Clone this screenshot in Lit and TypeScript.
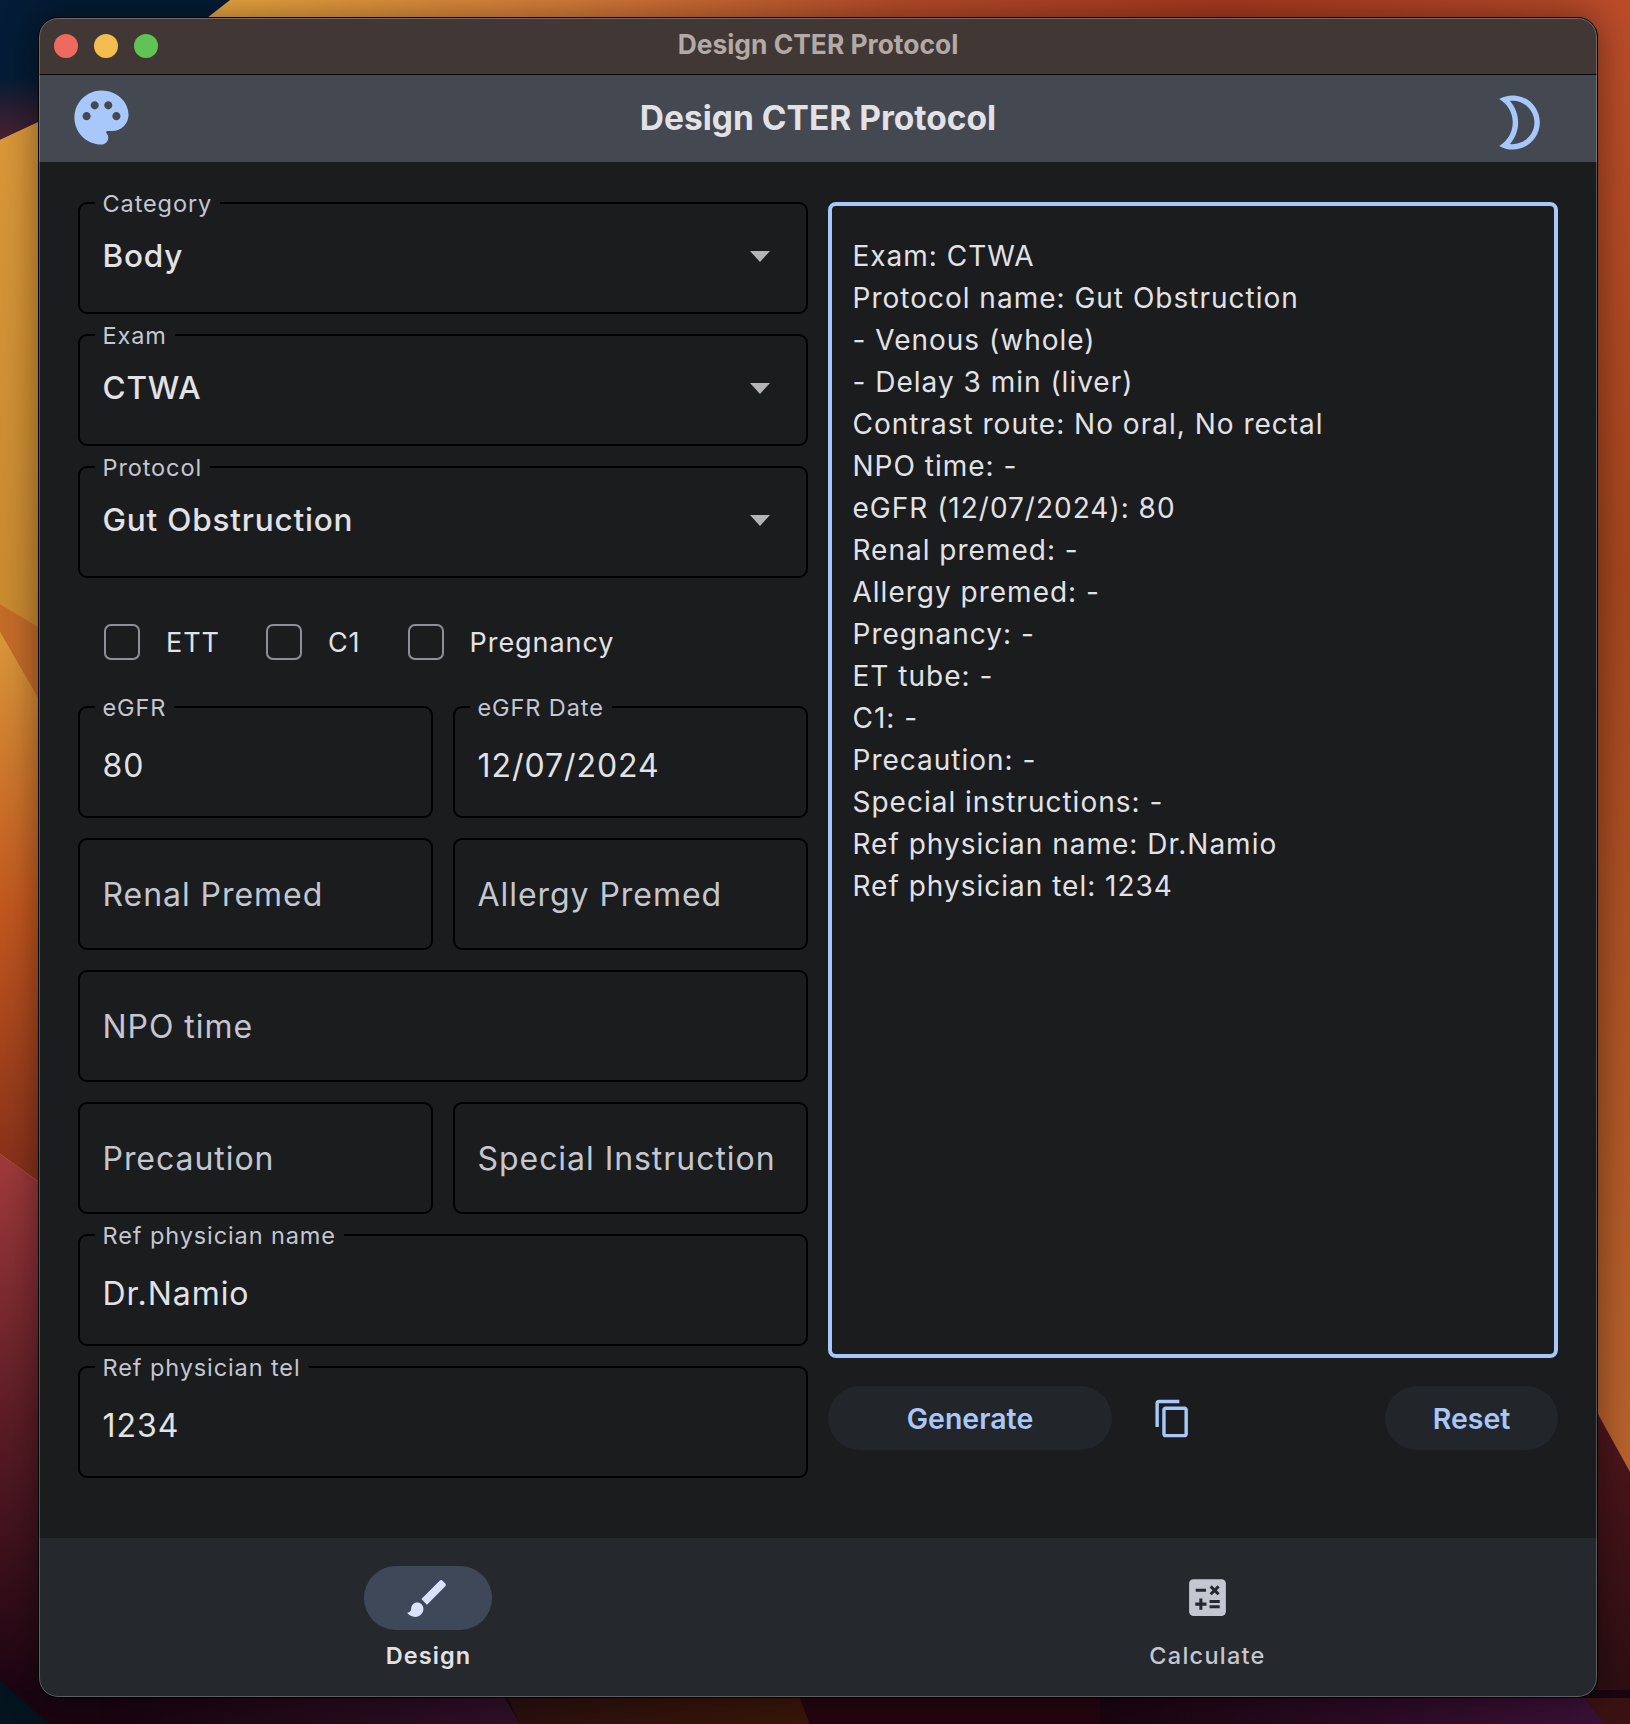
import {html, css, svg, LitElement} from 'lit';
import {customElement} from 'lit/decorators.js';

const PALETTE = 'M12 2C6.49 2 2 6.49 2 12s4.49 10 10 10c1.38 0 2.5-1.12 2.5-2.5 0-.61-.23-1.2-.64-1.67-.08-.1-.13-.21-.13-.33 0-.28.22-.5.5-.5H16c3.31 0 6-2.69 6-6 0-4.96-4.49-9-10-9zm5.5 11c-.83 0-1.5-.67-1.5-1.5s.67-1.5 1.5-1.5 1.5.67 1.5 1.5-.67 1.5-1.5 1.5zm-3-4c-.83 0-1.5-.67-1.5-1.5S13.67 6 14.5 6s1.5.67 1.5 1.5S15.33 9 14.5 9zM5 11.5c0-.83.67-1.5 1.5-1.5s1.5.67 1.5 1.5S7.33 13 6.5 13 5 12.33 5 11.5zm6-4c0 .83-.67 1.5-1.5 1.5S8 8.33 8 7.5 8.67 6 9.5 6s1.5.67 1.5 1.5z';
const MOON = 'M9.5 4c4.41 0 8 3.59 8 8s-3.59 8-8 8c-.34 0-.68-.02-1.01-.07C10.4 17.73 11.5 14.99 11.5 12s-1.1-5.73-3.01-7.93C8.82 4.02 9.16 4 9.5 4m0-2c-1.82 0-3.53.5-5 1.35 2.99 1.73 5 4.95 5 8.65s-2.01 6.92-5 8.65c1.47.85 3.18 1.35 5 1.35 5.52 0 10-4.48 10-10S15.02 2 9.5 2z';
const COPY = 'M16 1H4c-1.1 0-2 .9-2 2v14h2V3h12V1zm3 4H8c-1.1 0-2 .9-2 2v14c0 1.1.9 2 2 2h11c1.1 0 2-.9 2-2V7c0-1.1-.9-2-2-2zm0 16H8V7h11v14z';
const BRUSH = 'M7 14c-1.66 0-3 1.34-3 3 0 1.31-1.16 2-2 2 .92 1.22 2.49 2 4 2 2.21 0 4-1.79 4-4 0-1.66-1.34-3-3-3zm13.71-9.37l-1.34-1.34c-.39-.39-1.02-.39-1.41 0L9 12.25 11.75 15l8.96-8.96c.39-.39.39-1.02 0-1.41z';
const CALC = 'M19 3H5c-1.1 0-2 .9-2 2v14c0 1.1.9 2 2 2h14c1.1 0 2-.9 2-2V5c0-1.1-.9-2-2-2zm-5.97 4.06L14.09 6l1.41 1.41L16.91 6l1.06 1.06-1.41 1.41 1.41 1.41-1.06 1.06-1.41-1.4-1.41 1.41-1.06-1.06 1.41-1.41-1.41-1.42zm-6.78.66h5v1.5h-5v-1.5zM11.5 16h-2v2H8v-2H6v-1.5h2v-2h1.5v2h2V16zm6.5 1.25h-5v-1.5h5v1.5zm0-2.5h-5v-1.5h5v1.5z';

const OUTPUT = [
	'Exam: CTWA',
	'Protocol name: Gut Obstruction',
	'- Venous (whole)',
	'- Delay 3 min (liver)',
	'Contrast route: No oral, No rectal',
	'NPO time: -',
	'eGFR (12/07/2024): 80',
	'Renal premed: -',
	'Allergy premed: -',
	'Pregnancy: -',
	'ET tube: -',
	'C1: -',
	'Precaution: -',
	'Special instructions: -',
	'Ref physician name: Dr.Namio',
	'Ref physician tel: 1234',
];

const icon = (d: string, size: number, cls = '') => html`<svg class=${cls} width=${size} height=${size} viewBox="0 0 24 24" fill="currentColor"><path d=${d}></path></svg>`;

// desktop picture behind the window
const wallpaper = svg`
	<defs>
		<linearGradient id="top" x1="0" y1="0" x2="1630" y2="0" gradientUnits="userSpaceOnUse">
			<stop offset="0.14" stop-color="#eaa63f"/><stop offset="0.35" stop-color="#d97d3a"/>
			<stop offset="0.55" stop-color="#b84c2a"/><stop offset="0.75" stop-color="#a83a20"/>
			<stop offset="1" stop-color="#bb4c2a"/>
		</linearGradient>
		<linearGradient id="navy" x1="0" y1="0" x2="0" y2="140" gradientUnits="userSpaceOnUse">
			<stop offset="0.55" stop-color="#041c35"/><stop offset="1" stop-color="#4c2030"/>
		</linearGradient>
		<linearGradient id="gold" x1="0" y1="120" x2="0" y2="620" gradientUnits="userSpaceOnUse">
			<stop offset="0" stop-color="#d9983a"/><stop offset="1" stop-color="#c98a30"/>
		</linearGradient>
		<linearGradient id="fire" x1="0" y1="640" x2="0" y2="1180" gradientUnits="userSpaceOnUse">
			<stop offset="0" stop-color="#d9963a"/><stop offset="0.5" stop-color="#c2571f"/>
			<stop offset="1" stop-color="#85301a"/>
		</linearGradient>
		<linearGradient id="wine" x1="0" y1="1160" x2="0" y2="1690" gradientUnits="userSpaceOnUse">
			<stop offset="0" stop-color="#a03a3c"/><stop offset="0.5" stop-color="#5a1c25"/>
			<stop offset="1" stop-color="#1c0512"/>
		</linearGradient>
		<linearGradient id="east" x1="0" y1="0" x2="0" y2="1430" gradientUnits="userSpaceOnUse">
			<stop offset="0" stop-color="#bb4c2a"/><stop offset="0.4" stop-color="#a5461f"/>
			<stop offset="1" stop-color="#b8622c"/>
		</linearGradient>
		<linearGradient id="maroon" x1="0" y1="1420" x2="0" y2="1700" gradientUnits="userSpaceOnUse">
			<stop offset="0" stop-color="#4f161c"/><stop offset="1" stop-color="#2c0e12"/>
		</linearGradient>
		<linearGradient id="plum" x1="100" y1="0" x2="505" y2="0" gradientUnits="userSpaceOnUse">
			<stop offset="0" stop-color="#180410"/><stop offset="1" stop-color="#2f0f26"/>
		</linearGradient>
		<linearGradient id="plum2" x1="1100" y1="0" x2="1585" y2="0" gradientUnits="userSpaceOnUse">
			<stop offset="0" stop-color="#1a0510"/><stop offset="1" stop-color="#3a1035"/>
		</linearGradient>
		<linearGradient id="rust" x1="510" y1="0" x2="800" y2="0" gradientUnits="userSpaceOnUse">
			<stop offset="0" stop-color="#2a100f"/><stop offset="1" stop-color="#3a1608"/>
		</linearGradient>
	</defs>
	<rect width="1630" height="1724" fill="url(#top)"/>
	<polygon points="1000,20 1630,20 1630,1480 1000,1480" fill="url(#east)"/>
	<polygon points="0,0 230,0 207,18 60,112 0,140" fill="url(#navy)"/>
	<polygon points="0,140 60,112 60,640 0,604" fill="url(#gold)"/>
	<polygon points="0,604 60,640 60,737 0,632" fill="#c46c28"/>
	<polygon points="0,632 60,737 60,1197 0,1154" fill="url(#fire)"/>
	<polygon points="0,1154 60,1197 60,1700 0,1700" fill="url(#wine)"/>
	<polygon points="1000,1400 1598,1414 1630,1472 1630,1724 1000,1724" fill="url(#maroon)"/>
	<rect y="1690" width="1630" height="34" fill="#1a0510"/>
	<polygon points="0,1680 22,1700 48,1724 0,1724" fill="#03141e"/>
	<polygon points="100,1698 505,1698 520,1724 100,1724" fill="url(#plum)"/>
	<polygon points="508,1698 800,1698 810,1724 520,1724" fill="url(#rust)"/>
	<polygon points="800,1698 1100,1698 1100,1724 810,1724" fill="#240510"/>
	<polygon points="1100,1698 1585,1698 1605,1724 1100,1724" fill="url(#plum2)"/>
	<polygon points="1585,1698 1630,1698 1630,1724 1605,1724" fill="#3a1212"/>
`;

@customElement('app-root')
export class AppRoot extends LitElement {
	static styles = css`
		:host {
			display: block;
			position: relative;
			width: 1630px;
			height: 1724px;
			overflow: hidden;
			box-sizing: border-box;
			padding: 17px 0 0 38px;
			font-family: Inter, "Liberation Sans", sans-serif;
			color: #e2e2e6;
		}
		* { box-sizing: border-box; }

		.wallpaper { position: absolute; inset: 0; }

		.window {
			position: relative;
			width: 1560px;
			height: 1681px;
			border: 1px solid #000;
			border-radius: 20px;
			background: #1a1c1e;
			overflow: hidden;
			display: flex;
			flex-direction: column;
			box-shadow: 0 0 36px rgb(0 0 0 / 45%);
		}
		.window::after {
			content: "";
			position: absolute;
			inset: 0;
			border-radius: 19px;
			border: 1.5px solid rgb(255 255 255 / 26%);
			pointer-events: none;
		}

		.titlebar {
			height: 57px;
			flex: none;
			display: grid;
			grid-template-columns: 1fr auto 1fr;
			align-items: center;
			padding: 0 15px;
			background: #413735;
			border-bottom: 1.5px solid #000;
		}
		.lights { display: flex; gap: 16px; margin-top: -1px; }
		.light { width: 24px; height: 24px; border-radius: 50%; }
		.red { background: #ee6a5f; }
		.yellow { background: #f5bd4f; }
		.green { background: #5fc454; }
		.window-title { font-size: 26.4px; font-weight: 700; color: #b3a9a6; margin-top: -4px; }

		.header {
			height: 87px;
			flex: none;
			display: grid;
			grid-template-columns: 1fr auto 1fr;
			align-items: center;
			padding: 0 45px;
			background: #444851;
			color: #a8c8fb;
		}
		.app-title { font-size: 33.5px; font-weight: 700; color: #e2e2e6; margin-top: -2px; }
		.palette { margin: -2px 0 0 -15px; }
		.moon { justify-self: end; margin-top: 7px; }

		.body {
			flex: 1;
			display: grid;
			grid-template-columns: 730px 730px;
			gap: 20px;
			padding: 40px 39px 0;
		}
		.form { display: flex; flex-direction: column; gap: 20px; }
		.row { display: grid; grid-template-columns: 355px 355px; gap: 20px; }

		.field {
			position: relative;
			height: 112px;
			display: flex;
			align-items: center;
			justify-content: space-between;
			padding: 6px 36px 0 22.5px;
			border: 2.4px solid #000;
			border-radius: 9px;
			font-size: 32px;
			letter-spacing: 0.95px;
			white-space: nowrap;
		}
		.field.plain { padding-top: 1.5px; }
		.field .notch {
			position: absolute;
			left: 14.5px;
			top: -12px;
			padding: 0 8px;
			background: #1a1c1e;
			font-size: 23.5px;
			line-height: 24px;
			letter-spacing: 0.9px;
			color: #c4c6d0;
		}
		.field .hint { color: #c4c6d0; }
		.select { padding-top: 0; padding-bottom: 4.4px; font-weight: 550; font-size: 31.5px; letter-spacing: 0.8px; }
		.select .notch { font-weight: 400; }
		.caret {
			width: 0;
			height: 0;
			margin-top: 2px;
			border-left: 10px solid transparent;
			border-right: 10px solid transparent;
			border-top: 11px solid #b4b4b6;
		}

		.checks {
			height: 88px;
			display: flex;
			align-items: center;
			padding-left: 26px;
			font-size: 27px;
			letter-spacing: 0.95px;
		}
		.check { display: flex; align-items: center; gap: 26px; margin-right: 46px; }
		.check:last-child { margin-left: 1px; }
		.box { width: 36px; height: 36px; border: 2.2px solid #8e9099; border-radius: 7px; }

		.output-col { display: flex; flex-direction: column; }
		.output {
			height: 1156px;
			padding: 29px 20.5px;
			border: 4px solid #a8c8fb;
			border-radius: 8px;
			font-size: 28px;
			line-height: 42px;
			letter-spacing: 1px;
		}
		.actions {
			margin-top: 28px;
			display: flex;
			align-items: center;
			color: #a8c8fb;
		}
		.btn {
			height: 64px;
			display: flex;
			align-items: center;
			justify-content: center;
			border-radius: 32px;
			background: #22252a;
			font-size: 28.5px;
			font-weight: 600;
		}
		.generate { width: 284px; }
		.reset { width: 173px; margin-left: auto; }
		.copy { margin-left: 40px; }

		.nav {
			height: 159px;
			flex: none;
			display: grid;
			grid-template-columns: 1fr 1fr;
			background: #25282d;
		}
		.dest {
			display: flex;
			flex-direction: column;
			align-items: center;
			padding-top: 28px;
			font-size: 23.5px;
			font-weight: 500;
			letter-spacing: 1.25px;
			color: #c4c6d0;
		}
		.pill {
			width: 128px;
			height: 64px;
			display: flex;
			align-items: center;
			justify-content: center;
			border-radius: 32px;
			color: #c4c6d0;
			margin-bottom: 11px;
		}
		.pill svg { margin-top: -1px; }
		.dest.on { color: #e2e2e6; font-weight: 600; letter-spacing: 1.1px; }
		.dest.on .pill { background: #3f4859; color: #d8e2ff; margin-left: -2px; }
		.dest.on .pill svg { margin-top: 0; }
	`;

	private field(value: string, label = '') {
		return html`<div class="field ${label ? '' : 'plain'}">
			${label ? html`<span class="notch">${label}</span>` : ''}
			<span class=${label ? '' : 'hint'}>${value}</span>
		</div>`;
	}

	private select(label: string, value: string) {
		return html`<div class="field select">
			<span class="notch">${label}</span>
			<span>${value}</span>
			<span class="caret"></span>
		</div>`;
	}

	render() {
		return html`
			<svg class="wallpaper" width="1630" height="1724" viewBox="0 0 1630 1724">${wallpaper}</svg>
			<div class="window">
				<div class="titlebar">
					<div class="lights">
						<span class="light red"></span>
						<span class="light yellow"></span>
						<span class="light green"></span>
					</div>
					<div class="window-title">Design CTER Protocol</div>
				</div>
				<div class="header">
					${icon(PALETTE, 65, 'palette')}
					<div class="app-title">Design CTER Protocol</div>
					${icon(MOON, 65, 'moon')}
				</div>
				<div class="body">
					<div class="form">
						${this.select('Category', 'Body')}
						${this.select('Exam', 'CTWA')}
						${this.select('Protocol', 'Gut Obstruction')}
						<div class="checks">
							${['ETT', 'C1', 'Pregnancy'].map((c) => html`<label class="check"><span class="box"></span>${c}</label>`)}
						</div>
						<div class="row">${this.field('80', 'eGFR')}${this.field('12/07/2024', 'eGFR Date')}</div>
						<div class="row">${this.field('Renal Premed')}${this.field('Allergy Premed')}</div>
						${this.field('NPO time')}
						<div class="row">${this.field('Precaution')}${this.field('Special Instruction')}</div>
						${this.field('Dr.Namio', 'Ref physician name')}
						${this.field('1234', 'Ref physician tel')}
					</div>
					<div class="output-col">
						<div class="output">${OUTPUT.map((l) => html`<div>${l}</div>`)}</div>
						<div class="actions">
							<div class="btn generate">Generate</div>
							${icon(COPY, 41, 'copy')}
							<div class="btn reset">Reset</div>
						</div>
					</div>
				</div>
				<div class="nav">
					<div class="dest on"><div class="pill">${icon(BRUSH, 49)}</div>Design</div>
					<div class="dest"><div class="pill">${icon(CALC, 49)}</div>Calculate</div>
				</div>
			</div>
		`;
	}
}
